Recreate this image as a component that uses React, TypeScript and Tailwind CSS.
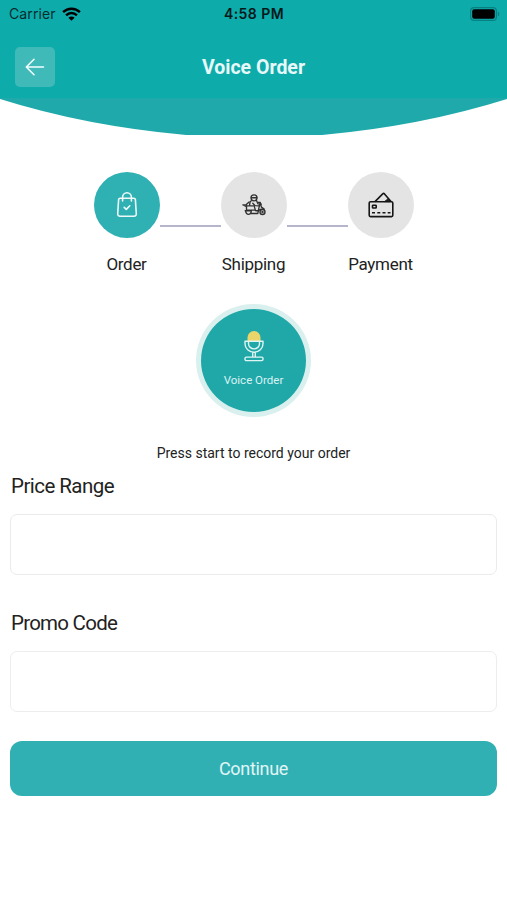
import type { ReactNode } from "react";

function BagIcon() {
  return (
    <svg width="22" height="26" viewBox="0 0 22 26" fill="none" stroke="#eefafa" strokeWidth="1.600" strokeLinecap="round" strokeLinejoin="round">
      <path d="M4.200 6.300h13.600c1 0 1.500.5 1.600 1.400l.9 14c.1 1.500-.8 2.600-2.300 2.600H4c-1.500 0-2.400-1.100-2.300-2.600l.9-14c.1-.9.6-1.400 1.600-1.400Z" />
      <path d="M6.600 9V5.200a4.400 4.400 0 0 1 8.800 0V9" />
      <path d="m8.200 15.400 2.100 2 3.500-3.600" />
    </svg>
  );
}

function ScooterIcon() {
  return (
    <svg width="24" height="22" viewBox="0 0 24 22" fill="none" stroke="#303030" strokeWidth="1.350" strokeLinecap="round" strokeLinejoin="round">
      <circle cx="12" cy="3.800" r="3" />
      <path d="M9.700 3.700h5M9.200 6.700C8 7.700 7.500 9.200 7.700 11.200M14.500 6.600l1.400 3.200 3.400.3M10.800 9.300l2.300 2.400 4.300.1" />
      <path d="M5.200 11.800h6.600c1 0 1.200 4.900 1.900 4.900h2.600l1.900-8.300h-1.800M18.200 8.400l1.200 4.700 2.800 2" />
      <path d="M.9 10.900l3.400-.3 2.800-2.700M1.200 10.900l3.300 1.800M4.500 12v4.100h8.300M3.200 16.700h6M9 19.500h6.800c.2-2.600 1.700-4.400 4.200-4.400" />
      <path d="M3.700 16.800c-.1 4.800 5.700 4.800 5.600 0" />
      <circle cx="20.500" cy="18" r="2.500" />
      <circle cx="20.500" cy="18" r=".5" />
    </svg>
  );
}

function CardIcon() {
  return (
    <svg width="26" height="26" viewBox="0 0 26 26" fill="none" stroke="#161616" strokeWidth="1.600" strokeLinejoin="round">
      <rect x="1.200" y="9.800" width="23.600" height="14.800" rx="1.300" />
      <path d="M7 9.600l7.700-7.700c.6-.6 1.200-.6 1.800 0l6.500 7.700" />
      <path d="m16.400 9.600 3.700-2.900 2.200 2.900Z" fill="#222" strokeWidth=".8" />
      <rect x="4.500" y="13.200" width="3.700" height="2.800" rx=".6" />
      <path d="M4 20.800h3M9.300 20.800h3M14.500 20.800h3M19.700 20.800h2.800" />
    </svg>
  );
}

function MicIcon() {
  return (
    <svg width="20" height="32" viewBox="0 0 20 32" fill="none" stroke="#dff5f3" strokeWidth="1.400">
      <path d="M3.500 11V7.500a6.500 6.500 0 0 1 13 0V11Z" fill="#ead56a" stroke="none" />
      <path d="M1 11.200h18v2.600a9 8.500 0 0 1-18 0Z" strokeLinejoin="round" />
      <path d="M4.500 11.500v2.200a5.500 5.200 0 0 0 11 0v-2.200M8.700 22.300v4.800M11.300 22.300v4.800" />
      <rect x="1" y="27.100" width="18" height="3.500" rx="1.300" />
    </svg>
  );
}

function Step({ label, active = false, children }: { label: string; active?: boolean; children: ReactNode }) {
  return (
    <div className="flex w-[66px] flex-col items-center">
      <div className={`flex h-[66px] w-[66px] items-center justify-center rounded-full ${active ? "bg-[#2fb0b3]" : "bg-[#e4e4e4]"}`}>
        {children}
      </div>
      <span className="mt-[14px] whitespace-nowrap text-[17px] leading-6 tracking-[-0.3px] text-[#222]">{label}</span>
    </div>
  );
}

function Connector() {
  return <div className="mt-[53px] h-[1.500px] w-[61px] bg-[#b5b5cc]" />;
}

export default function App() {
  return (
    <main className="h-[900px] w-[507px] overflow-hidden bg-white font-[Roboto,'Noto_Sans',sans-serif] text-[#222]">
      <header className="h-[98px] bg-[#0eabab]">
        <div className="grid h-7 grid-cols-3 items-center pl-[9px] pr-[7px] font-['Inter',sans-serif] text-[#052d2e]">
          <div className="flex items-center gap-[6px]">
            <span className="text-[14px] leading-5 tracking-[0.1px]">Carrier</span>
            <svg width="19" height="14" viewBox="0 0 19 14" fill="none" stroke="#000" strokeWidth="2.500">
              <path d="M1.100 5.200a12 12 0 0 1 16.800 0M4.100 8.300a7.700 7.700 0 0 1 10.800 0" />
              <path d="M6.400 10.700a4.400 4.400 0 0 1 6.200 0L9.500 13.800Z" fill="#000" stroke="none" />
            </svg>
          </div>
          <span className="-ml-px whitespace-nowrap text-center text-[14px] font-semibold leading-5 tracking-[0.45px] text-[#03191a]">4:58 PM</span>
          <svg className="justify-self-end" width="30" height="14" viewBox="0 0 30 14">
            <rect x=".6" y=".6" width="25.800" height="12.800" rx="3.500" fill="none" stroke="#087f80" strokeWidth="1.200" />
            <rect x="2.200" y="2.200" width="22.600" height="9.600" rx="2" fill="#000" />
            <path d="M27.800 4.700c2 .6 2 4 0 4.600Z" fill="#087f80" />
          </svg>
        </div>
        <div className="mt-[19px] grid grid-cols-[40px_1fr_40px] items-center px-[15px]">
          <button aria-label="Back" className="flex h-10 w-10 items-center justify-center rounded-[5px] bg-[#40b9b9]">
            <svg width="20" height="18" viewBox="0 0 20 18" fill="none" stroke="#f2ffff" strokeWidth="1.600" strokeLinecap="round" strokeLinejoin="round">
              <path d="M18.500 9H1.300M9 1.300 1.300 9 9 16.700" />
            </svg>
          </button>
          <h1 className="pt-px text-center text-[19.500px] font-bold leading-7 text-[#e6f8f8]">Voice Order</h1>
        </div>
      </header>
      <svg className="block" width="507" height="38" viewBox="0 0 507 38">
        <path d="M0 0H507V1Q421 28 322 37H186Q86 28 0 1Z" fill="#20a9aa" />
      </svg>

      <section className="mt-9 flex justify-center">
        <Step label="Order" active><BagIcon /></Step>
        <Connector />
        <Step label="Shipping"><ScooterIcon /></Step>
        <Connector />
        <Step label="Payment"><CardIcon /></Step>
      </section>

      <div className="mt-[28px] flex justify-center">
        <button className="flex h-[113px] w-[115px] flex-col items-center rounded-[50%] border-[5px] border-[#d9f0ee] bg-[#20a8a9] pt-[21px]">
          <MicIcon />
          <span className="mt-[8px] whitespace-nowrap text-[11.500px] leading-5 text-[#daf3f3]">Voice Order</span>
        </button>
      </div>

      <p className="mt-[24px] text-center text-[14px] leading-6">Press start to record your order</p>
      <form className="px-[10px]">
        <label htmlFor="price" className="ml-px mt-[5px] block text-[20.500px] leading-8 tracking-[-0.55px]">Price Range</label>
        <input id="price" className="mt-3 block h-[61px] w-full rounded-[7px] border border-[#ebebeb] bg-white px-4 text-lg outline-none" />
        <label htmlFor="promo" className="ml-px mt-8 block text-[20.500px] leading-8 tracking-[-0.75px]">Promo Code</label>
        <input id="promo" className="mt-3 block h-[61px] w-full rounded-[7px] border border-[#ededed] bg-white px-4 text-lg outline-none" />
        <button type="button" className="mt-[29px] block h-[55px] w-full rounded-[12px] bg-[#31b0b4] text-[18px] leading-7 tracking-[-0.3px] text-[#e0f5f5]">Continue</button>
      </form>
    </main>
  );
}
